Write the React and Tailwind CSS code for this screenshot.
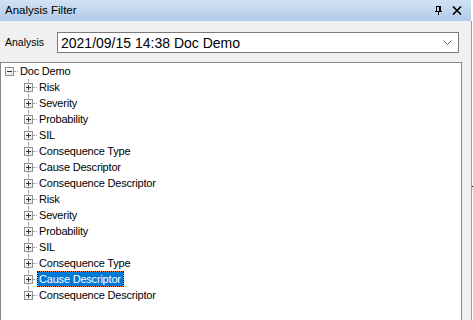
import React from 'react';

const items = [
  'Risk',
  'Severity',
  'Probability',
  'SIL',
  'Consequence Type',
  'Cause Descriptor',
  'Consequence Descriptor',
  'Risk',
  'Severity',
  'Probability',
  'SIL',
  'Consequence Type',
  'Cause Descriptor',
  'Consequence Descriptor',
];

const ExpandBox = ({ expanded }) => (
  <span className="absolute top-[4px] w-[9px] h-[9px] border border-[#919191] bg-gradient-to-br from-white to-[#e4e4e4] flex items-center justify-center">
    <svg width="7" height="7" viewBox="0 0 7 7" shapeRendering="crispEdges">
      <rect x="1" y="3" width="5" height="1" fill="#333" />
      {!expanded && <rect x="3" y="1" width="1" height="5" fill="#333" />}
    </svg>
  </span>
);

const Label = ({ text, selected }) =>
  selected ? (
    <span className="bg-[#ff8728] flex">
      <span className="border border-dotted border-black bg-[#0078d7] bg-clip-padding pl-[1px] pr-[2px] h-[16px] leading-[14px] text-white">
        {text}
      </span>
    </span>
  ) : (
    <span className="border border-transparent pl-[1px] pr-[2px] h-[16px] leading-[14px] text-black">{text}</span>
  );

const TreeRow = ({ text, last, selected }) => (
  <div className="flex h-[16px]">
    <div className="relative w-[36px] shrink-0">
      {/* sibling line */}
      <span
        className={`absolute left-[27px] top-0 border-l border-dotted border-[#a0a0a0] ${last ? 'h-[8px]' : 'h-[16px]'}`}
      />
      <span className="absolute left-[32px] top-[8px] w-[4px] border-t border-dotted border-[#a0a0a0]" />
      <span className="absolute left-[23px] top-0 h-full">
        <ExpandBox />
      </span>
    </div>
    <Label text={text} selected={selected} />
  </div>
);

export default function App() {
  return (
    <div
      className="w-[473px] h-[320px] overflow-hidden flex bg-[#f0f0f0] text-[11px] tracking-[-0.2px]"
      style={{ fontFamily: '"Liberation Sans", Arial, sans-serif' }}
    >
      <div className="w-[471px] flex flex-col">
        {/* title bar */}
        <div className="h-[21px] shrink-0 flex items-center justify-between pl-[5px] pr-[9px] bg-gradient-to-b from-[#d1e2f4] to-[#b1cae8]">
          <span className="text-[11.5px] tracking-normal text-black">Analysis Filter</span>
          <div className="flex items-center gap-[10px]">
            <svg width="7" height="9" viewBox="0 0 7 9" shapeRendering="crispEdges">
              <rect x="1" y="0" width="4" height="1" fill="#000" />
              <rect x="1" y="0" width="1" height="5" fill="#000" />
              <rect x="4" y="0" width="2" height="5" fill="#000" />
              <rect x="0" y="5" width="7" height="1" fill="#000" />
              <rect x="3" y="6" width="1" height="3" fill="#000" />
            </svg>
            <svg width="10" height="9" viewBox="0 0 10 9">
              <path d="M1 0.5 L9 8.5 M9 0.5 L1 8.5" stroke="#000" strokeWidth="1.6" />
            </svg>
          </div>
        </div>

        {/* analysis selector */}
        <div className="h-[41px] shrink-0 flex items-start pt-[11px] pl-[5px]">
          <span className="w-[52px] h-[21px] leading-[21px] text-[10.5px] tracking-normal text-black">Analysis</span>
          <div className="w-[402px] h-[21px] border border-[#7a7a7a] bg-white flex items-center justify-between pl-[3px] pr-[6px]">
            <span className="text-[14px] tracking-normal leading-none text-black">2021/09/15 14:38 Doc Demo</span>
            <svg width="9" height="5" viewBox="0 0 9 5">
              <path d="M0.5 0.5 L4.5 4.5 L8.5 0.5" fill="none" stroke="#606060" strokeWidth="1" />
            </svg>
          </div>
        </div>

        {/* tree */}
        <div className="flex flex-1">
          <div className="w-[461px] flex-1 border-t border-l border-r border-[#828790] bg-white">
            <div className="flex h-[16px]">
              <div className="relative w-[17px] shrink-0">
                <span className="absolute left-[4px] top-0 h-full">
                  <ExpandBox expanded />
                </span>
                <span className="absolute left-[13px] top-[8px] w-[4px] border-t border-dotted border-[#a0a0a0]" />
              </div>
              <Label text="Doc Demo" />
            </div>
            {items.map((t, i) => (
              <TreeRow key={i} text={t} last={i === items.length - 1} selected={i === 12} />
            ))}
          </div>
          <div className="w-[9px] shrink-0" />
        </div>
      </div>
      <div className="w-[2px] flex flex-col">
        <div className="h-[21px] bg-white" />
        <div className="flex-1 flex">
          <div className="w-px bg-[#a0a0a0]" />
          <div className="w-px bg-white flex flex-col">
            <div className="h-[165px]" />
            <div className="h-px bg-black" />
          </div>
        </div>
      </div>
    </div>
  );
}
